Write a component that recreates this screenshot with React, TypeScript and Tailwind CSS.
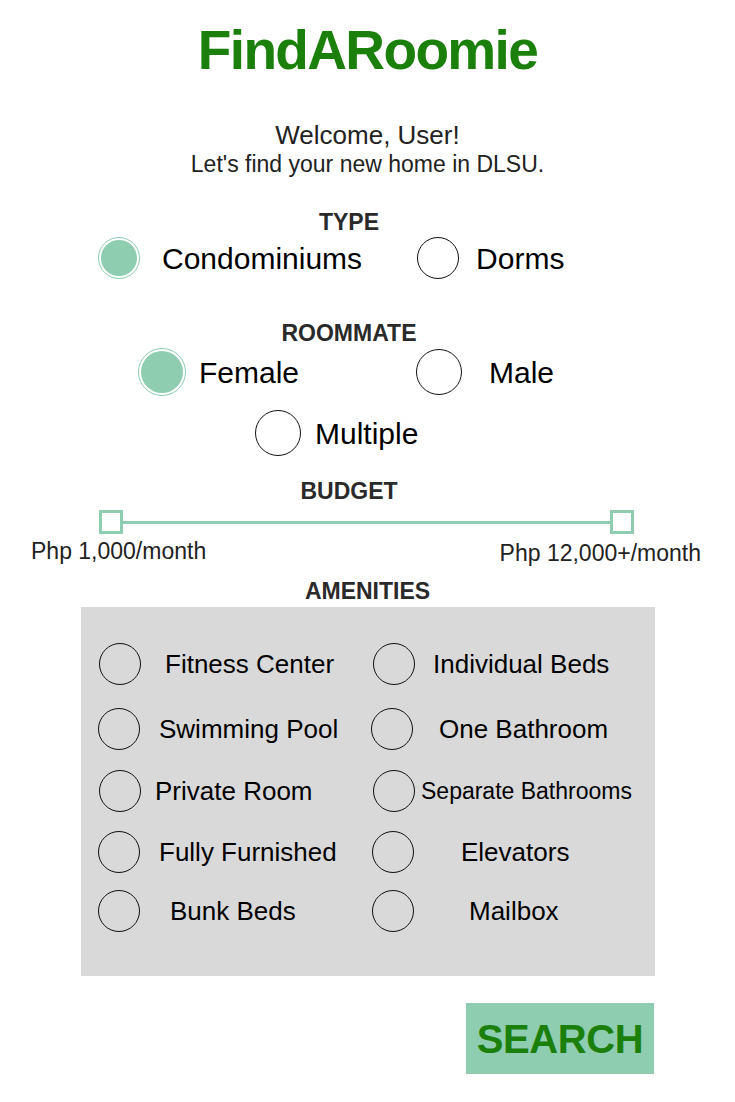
import React from "react"

const mint = "bg-[#8ecdb0]"

function Open({ size }: { size: string }) {
  return <div className={`${size} shrink-0 rounded-full border-[1.5px] border-[#111]`} />
}

function Filled({ size }: { size: string }) {
  return (
    <div className={`${size} shrink-0 rounded-full border-[1.5px] border-[#8ecdb0] bg-white p-[2px]`}>
      <div className={`h-full w-full rounded-full ${mint}`} />
    </div>
  )
}

function Heading({ children, className }: { children: React.ReactNode; className?: string }) {
  return (
    <div className={`flex justify-center ${className ?? ""}`}>
      <h2 className="text-[23px] leading-[28px] font-bold text-[#2a2a2a]">{children}</h2>
    </div>
  )
}

const amenities = [
  {
    mt: "mt-[35px]",
    left: { label: "Fitness Center", pad: "pl-[18px]", gap: "ml-[24px]", text: "text-[26px]" },
    right: { label: "Individual Beds", pad: "pl-[6px]", gap: "ml-[18px]", text: "text-[26px]" },
  },
  {
    mt: "mt-[21px]",
    left: { label: "Swimming Pool", pad: "pl-[17px]", gap: "ml-[19px]", text: "text-[26px]" },
    right: { label: "One Bathroom", pad: "pl-[4px]", gap: "ml-[26px]", text: "text-[26px]" },
  },
  {
    mt: "mt-[18px]",
    left: { label: "Private Room", pad: "pl-[18px]", gap: "ml-[14px]", text: "text-[26px]" },
    right: { label: "Separate Bathrooms", pad: "pl-[6px]", gap: "ml-[6px]", text: "text-[23px]" },
  },
  {
    mt: "mt-[17px]",
    left: { label: "Fully Furnished", pad: "pl-[17px]", gap: "ml-[19px]", text: "text-[26px]" },
    right: { label: "Elevators", pad: "pl-[5px]", gap: "ml-[47px]", text: "text-[26px]" },
  },
  {
    mt: "mt-[15px]",
    left: { label: "Bunk Beds", pad: "pl-[17px]", gap: "ml-[30px]", text: "text-[26px]" },
    right: { label: "Mailbox", pad: "pl-[5px]", gap: "ml-[55px]", text: "text-[26px]" },
  },
]

export default function App() {
  return (
    <div className="min-h-screen w-[735px] bg-white font-['Liberation_Sans',Arial,sans-serif] text-black">
      {/* Title */}
      <div className="pt-[18px] text-center">
        <h1 className="text-[55px] leading-[64px] font-bold tracking-[-0.03em] text-[#1b800b]">FindARoomie</h1>
      </div>

      {/* Welcome */}
      <div className="mt-[38px] text-center text-[#222]">
        <p className="text-[26px] leading-[30px]">Welcome, User!</p>
        <p className="text-[23px] leading-[28px]">Let's find your new home in DLSU.</p>
      </div>

      {/* Type */}
      <Heading className="mt-[30px] pr-[37px]">TYPE</Heading>
      <div className="flex h-[44px] items-center pl-[98px] text-[30px]">
        <Filled size="h-[42px] w-[42px]" />
        <span className="ml-[22px]">Condominiums</span>
        <div className="ml-[55px] flex items-center">
          <Open size="h-[42px] w-[42px]" />
          <span className="ml-[17px]">Dorms</span>
        </div>
      </div>

      {/* Roommate */}
      <Heading className="mt-[39px] pr-[37px]">ROOMMATE</Heading>
      <div className="flex h-[50px] items-center pl-[138px] text-[30px]">
        <Filled size="h-[48px] w-[48px]" />
        <span className="ml-[13px] w-[217px]">Female</span>
        <Open size="h-[46px] w-[46px]" />
        <span className="ml-[27px]">Male</span>
      </div>
      <div className="mt-[12px] flex h-[48px] items-center pl-[255px] text-[30px]">
        <Open size="h-[46px] w-[46px]" />
        <span className="ml-[14px]">Multiple</span>
      </div>

      {/* Budget */}
      <Heading className="mt-[20px] pr-[37px]">BUDGET</Heading>
      <div className="ml-[99px] mt-[5px] flex h-[24px] w-[535px] items-center">
        <div className="h-[24px] w-[24px] border-[3px] border-[#8ecdb0] bg-white" />
        <div className={`h-[3px] flex-1 ${mint}`} />
        <div className="h-[24px] w-[24px] border-[3px] border-[#8ecdb0] bg-white" />
      </div>
      <div className="mt-[4px] flex items-start justify-between pl-[31px] pr-[34px] text-[23px] leading-[26px] text-[#222]">
        <span>Php 1,000/month</span>
        <span className="mt-[2px]">Php 12,000+/month</span>
      </div>

      {/* Amenities */}
      <Heading className="mt-[11px]">AMENITIES</Heading>
      <div className="ml-[81px] mt-[2px] flex h-[369px] w-[574px] flex-col bg-[#d9d9d9]">
        {amenities.map((row) => (
          <div key={row.left.label} className={`flex h-[44px] shrink-0 items-center ${row.mt}`}>
            <div className={`flex w-[286px] items-center ${row.left.pad}`}>
              <Open size="h-[42px] w-[42px]" />
              <span className={`${row.left.gap} ${row.left.text} whitespace-nowrap`}>{row.left.label}</span>
            </div>
            <div className={`flex items-center ${row.right.pad}`}>
              <Open size="h-[42px] w-[42px]" />
              <span className={`${row.right.gap} ${row.right.text} whitespace-nowrap`}>{row.right.label}</span>
            </div>
          </div>
        ))}
      </div>

      {/* Search */}
      <div className="ml-[466px] mt-[27px] pb-[28px]">
        <button
          type="button"
          className={`flex h-[71px] w-[188px] items-center justify-center ${mint} text-[40px] font-bold tracking-[-0.01em] text-[#1b800b]`}
        >
          SEARCH
        </button>
      </div>
    </div>
  )
}
